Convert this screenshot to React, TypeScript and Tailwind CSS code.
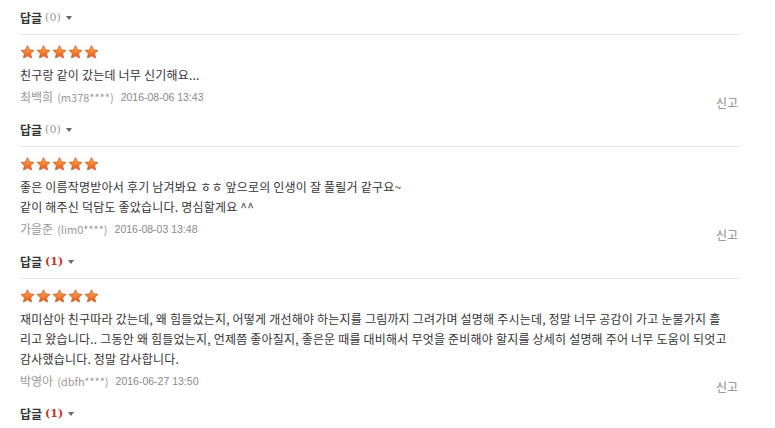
import React from "react";

const font = { fontFamily: '"Noto Sans CJK KR", "Noto Sans", sans-serif' };

function Star() {
  return (
    <svg width="15" height="14" viewBox="0 0 24 23">
      <defs>
        <linearGradient id="sg" x1="0" y1="0" x2="0" y2="1">
          <stop offset="0" stopColor="#fbb566" />
          <stop offset="0.55" stopColor="#f27e30" />
          <stop offset="1" stopColor="#e35e1e" />
        </linearGradient>
      </defs>
      <path
        d="M12 1.2l3.2 6.8 7.3.9-5.4 5.1 1.4 7.3L12 17.7l-6.5 3.6 1.4-7.3-5.4-5.1 7.3-.9z"
        fill="url(#sg)"
        stroke="#cc5a22"
        strokeWidth="1.4"
        strokeLinejoin="round"
      />
    </svg>
  );
}

function ReplyRow({ count }: { count: number }) {
  return (
    <div className="h-[34px] flex items-center border-b border-[#e8e8e8] text-[12px] leading-[16px]">
      <span className="font-bold text-[#333]">답글</span>
      {count > 0 ? (
        <span className="ml-[3px] text-[11px] font-bold text-[#c0392b]" style={{ fontFamily: '"DejaVu Serif", serif' }}>
          (1)
        </span>
      ) : (
        <span className="ml-[3px] text-[11px] text-[#999]" style={{ fontFamily: '"DejaVu Serif", serif' }}>
          (0)
        </span>
      )}
      <span className="ml-[5px] inline-block w-0 h-0 border-l-[3px] border-r-[3px] border-t-[4px] border-l-transparent border-r-transparent border-t-[#666]" />
    </div>
  );
}

function Review({ lines, name, id, date }: { lines: string[]; name: string; id: string; date: string }) {
  return (
    <div className="pt-[10px] pb-[2px]">
      <div className="flex gap-px h-[14px]">
        <Star />
        <Star />
        <Star />
        <Star />
        <Star />
      </div>
      <div className="mt-[6px] text-[12px] leading-[20px] text-[#333] whitespace-nowrap tracking-[0.2px]">
        {lines.map((l, i) => (
          <div key={i}>{l}</div>
        ))}
      </div>
      <div className="mt-[2px] h-[24px] flex justify-between items-start">
        <div className="leading-[20px] text-[#999] flex items-center">
          <span className="text-[12px]">{name}</span>
          <span className="ml-[4px] text-[11px]">({id})</span>
          <span className="ml-[7px] text-[10.5px] text-[#888]" style={{ fontFamily: '"Liberation Sans", Arial, sans-serif' }}>
            {date}
          </span>
        </div>
        <div className="pt-[8px] leading-[16px] text-[12px] text-[#8a8a8a] mr-[2px]">신고</div>
      </div>
    </div>
  );
}

export default function App() {
  return (
    <div className="w-[775px] h-[428px] bg-white overflow-hidden pl-[20px] pt-px" style={font}>
      <div className="w-[720px]">
        <ReplyRow count={0} />
        <Review
          lines={["친구랑 같이 갔는데 너무 신기해요..."]}
          name="최백희"
          id="m378****"
          date="2016-08-06 13:43"
        />
        <ReplyRow count={0} />
        <Review
          lines={[
            "좋은 이름작명받아서 후기 남겨봐요 ㅎㅎ 앞으로의 인생이 잘 풀릴거 같구요~",
            "같이 해주신 덕담도 좋았습니다. 명심할게요 ^^",
          ]}
          name="가을준"
          id="lim0****"
          date="2016-08-03 13:48"
        />
        <ReplyRow count={1} />
        <Review
          lines={[
            "재미삼아 친구따라 갔는데, 왜 힘들었는지, 어떻게 개선해야 하는지를 그림까지 그려가며 설명해 주시는데, 정말 너무 공감이 가고 눈물가지 흘",
            "리고 왔습니다.. 그동안 왜 힘들었는지, 언제쯤 좋아질지, 좋은운 때를 대비해서 무엇을 준비해야 할지를 상세히 설명해 주어 너무 도움이 되엇고",
            "감사했습니다. 정말 감사합니다.",
          ]}
          name="박영아"
          id="dbfh****"
          date="2016-06-27 13:50"
        />
        <ReplyRow count={1} />
      </div>
    </div>
  );
}
